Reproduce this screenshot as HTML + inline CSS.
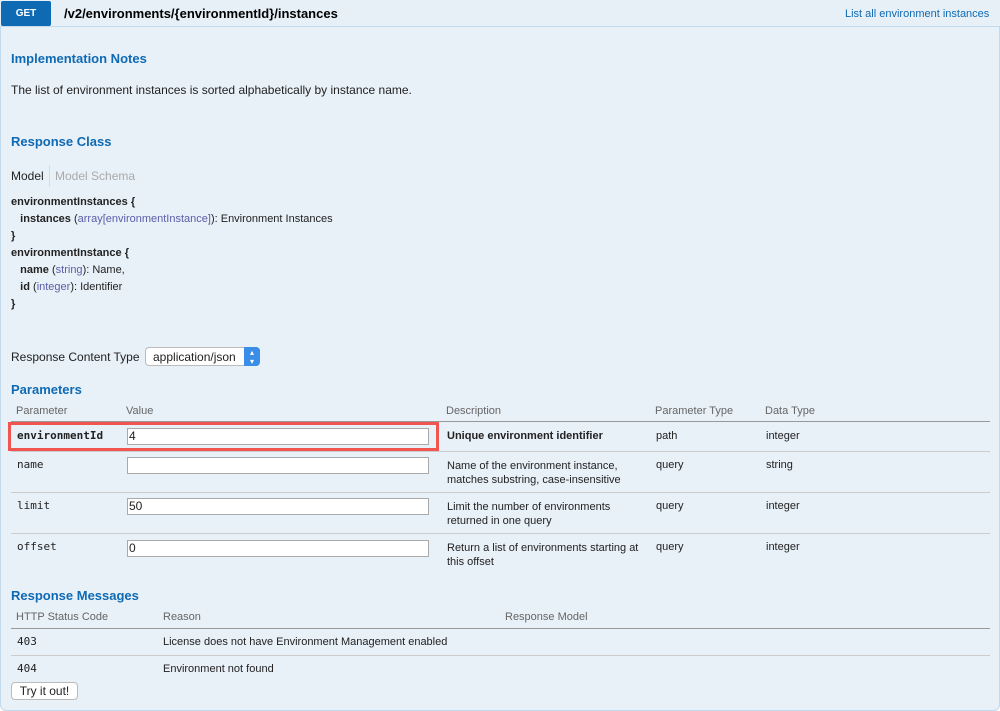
<!DOCTYPE html>
<html><head><meta charset="utf-8"><style>
*{margin:0;padding:0;box-sizing:border-box}
body{width:1000px;height:711px;background:#fff;font-family:"Liberation Sans",Arial,sans-serif;font-size:12px;color:#222;position:relative;overflow:hidden}
.box{position:absolute;left:0;top:0;width:1000px;height:711px;background:#e8f0f8;border:1px solid #c3d9ec;border-radius:0 0 6px 6px}
.hdr{position:absolute;left:0;top:0;width:1000px;height:27px;background:#e7f0f7;border-bottom:1px solid #c3d9ec}
.get{position:absolute;left:1px;top:1px;width:50px;height:25px;background:#0f6ab4;border-radius:2px;color:#fff;font-weight:bold;font-size:10px;text-align:center;line-height:25px}
.a{position:absolute;white-space:nowrap}
h4{position:absolute;color:#0f6ab4;font-size:13px;font-weight:bold;white-space:nowrap}
.mono{font-family:"DejaVu Sans Mono","Liberation Mono",monospace;font-size:11px}
.th{color:#666}
.line{position:absolute;height:1px;background:#ccc;left:11px;width:979px}
.inp{position:absolute;left:127px;width:302px;height:17px;background:#fff;border:1px solid #aaa;font-size:12px;padding-left:1px;line-height:15px}
.t{color:#5a5ea8}
</style></head><body>
<div class="box"></div>
<div class="hdr"></div>
<div class="get">GET</div>
<div class="a" style="left:64px;top:6px;font-size:13px;font-weight:bold;color:#000">/v2/environments/{environmentId}/instances</div>
<div class="a" style="left:845px;top:8px;color:#0f6ab4;font-size:11px">List all environment instances</div>

<h4 style="left:11px;top:51px">Implementation Notes</h4>
<div class="a" style="left:11px;top:83px">The list of environment instances is sorted alphabetically by instance name.</div>
<h4 style="left:11px;top:134px">Response Class</h4>
<div class="a" style="left:11px;top:169px">Model</div>
<div class="a" style="left:49px;top:165px;width:1px;height:22px;background:#ddd"></div>
<div class="a" style="left:55px;top:169px;color:#aaa">Model Schema</div>
<div style="position:absolute;left:11px;top:194px;font-size:11px;line-height:17px;color:#222">
<b>environmentInstances {</b><br>
&nbsp;&nbsp;&nbsp;<b>instances</b> (<span class="t">array[environmentInstance]</span>): Environment Instances<br>
<b>}</b><br>
<b>environmentInstance {</b><br>
&nbsp;&nbsp;&nbsp;<b>name</b> (<span class="t">string</span>): Name,<br>
&nbsp;&nbsp;&nbsp;<b>id</b> (<span class="t">integer</span>): Identifier<br>
<b>}</b>
</div>

<div class="a" style="left:11px;top:350px">Response Content Type</div>
<div class="a" style="left:145px;top:347px;width:115px;height:19px;background:#fff;border:1px solid #bbb;border-radius:4px;font-size:12px;padding:2px 0 0 7px">application/json</div>
<div class="a" style="left:244px;top:347px;width:16px;height:19px;background:#3b8ee8;border-radius:0 4px 4px 0;color:#fff;font-size:8px;text-align:center;line-height:9px;padding-top:1px">▴<br>▾</div>

<h4 style="left:11px;top:382px">Parameters</h4>
<div class="a th" style="left:16px;top:405px;font-size:11px">Parameter</div>
<div class="a th" style="left:126px;top:405px;font-size:11px">Value</div>
<div class="a th" style="left:446px;top:405px;font-size:11px">Description</div>
<div class="a th" style="left:655px;top:405px;font-size:11px">Parameter Type</div>
<div class="a th" style="left:765px;top:405px;font-size:11px">Data Type</div>
<div class="line" style="top:421px;background:#999"></div>
<div class="line" style="top:451px"></div>
<div class="line" style="top:492px"></div>
<div class="line" style="top:533px"></div>

<div class="a mono" style="left:17px;top:429px;font-weight:bold">environmentId</div>
<div class="inp" style="top:428px">4</div>
<div class="a" style="left:447px;top:430px;font-weight:bold;font-size:11px">Unique environment identifier</div>
<div class="a" style="left:656px;top:430px;font-size:11px">path</div>
<div class="a" style="left:766px;top:430px;font-size:11px">integer</div>
<div class="a" style="left:8px;top:422px;width:431px;height:29px;border:3px solid #f0564f"></div>

<div class="a mono" style="left:17px;top:458px">name</div>
<div class="inp" style="top:457px"></div>
<div class="a" style="left:447px;top:459px;font-size:11px;line-height:14px">Name of the environment instance,<br>matches substring, case-insensitive</div>
<div class="a" style="left:656px;top:459px;font-size:11px">query</div>
<div class="a" style="left:766px;top:459px;font-size:11px">string</div>

<div class="a mono" style="left:17px;top:499px">limit</div>
<div class="inp" style="top:498px">50</div>
<div class="a" style="left:447px;top:500px;font-size:11px;line-height:14px">Limit the number of environments<br>returned in one query</div>
<div class="a" style="left:656px;top:500px;font-size:11px">query</div>
<div class="a" style="left:766px;top:500px;font-size:11px">integer</div>

<div class="a mono" style="left:17px;top:540px">offset</div>
<div class="inp" style="top:540px">0</div>
<div class="a" style="left:447px;top:541px;font-size:11px;line-height:14px">Return a list of environments starting at<br>this offset</div>
<div class="a" style="left:656px;top:541px;font-size:11px">query</div>
<div class="a" style="left:766px;top:541px;font-size:11px">integer</div>

<h4 style="left:11px;top:588px">Response Messages</h4>
<div class="a th" style="left:16px;top:611px;font-size:11px">HTTP Status Code</div>
<div class="a th" style="left:163px;top:611px;font-size:11px">Reason</div>
<div class="a th" style="left:505px;top:611px;font-size:11px">Response Model</div>
<div class="line" style="top:628px;background:#999"></div>
<div class="a mono" style="left:17px;top:635px">403</div>
<div class="a" style="left:163px;top:636px;font-size:11px">License does not have Environment Management enabled</div>
<div class="line" style="top:655px"></div>
<div class="a mono" style="left:17px;top:662px">404</div>
<div class="a" style="left:163px;top:663px;font-size:11px">Environment not found</div>
<div class="a" style="left:11px;top:682px;width:67px;height:18px;background:#fff;border:1px solid #bbb;border-radius:4px;text-align:center;line-height:16px;font-size:12px">Try it out!</div>
</body></html>
